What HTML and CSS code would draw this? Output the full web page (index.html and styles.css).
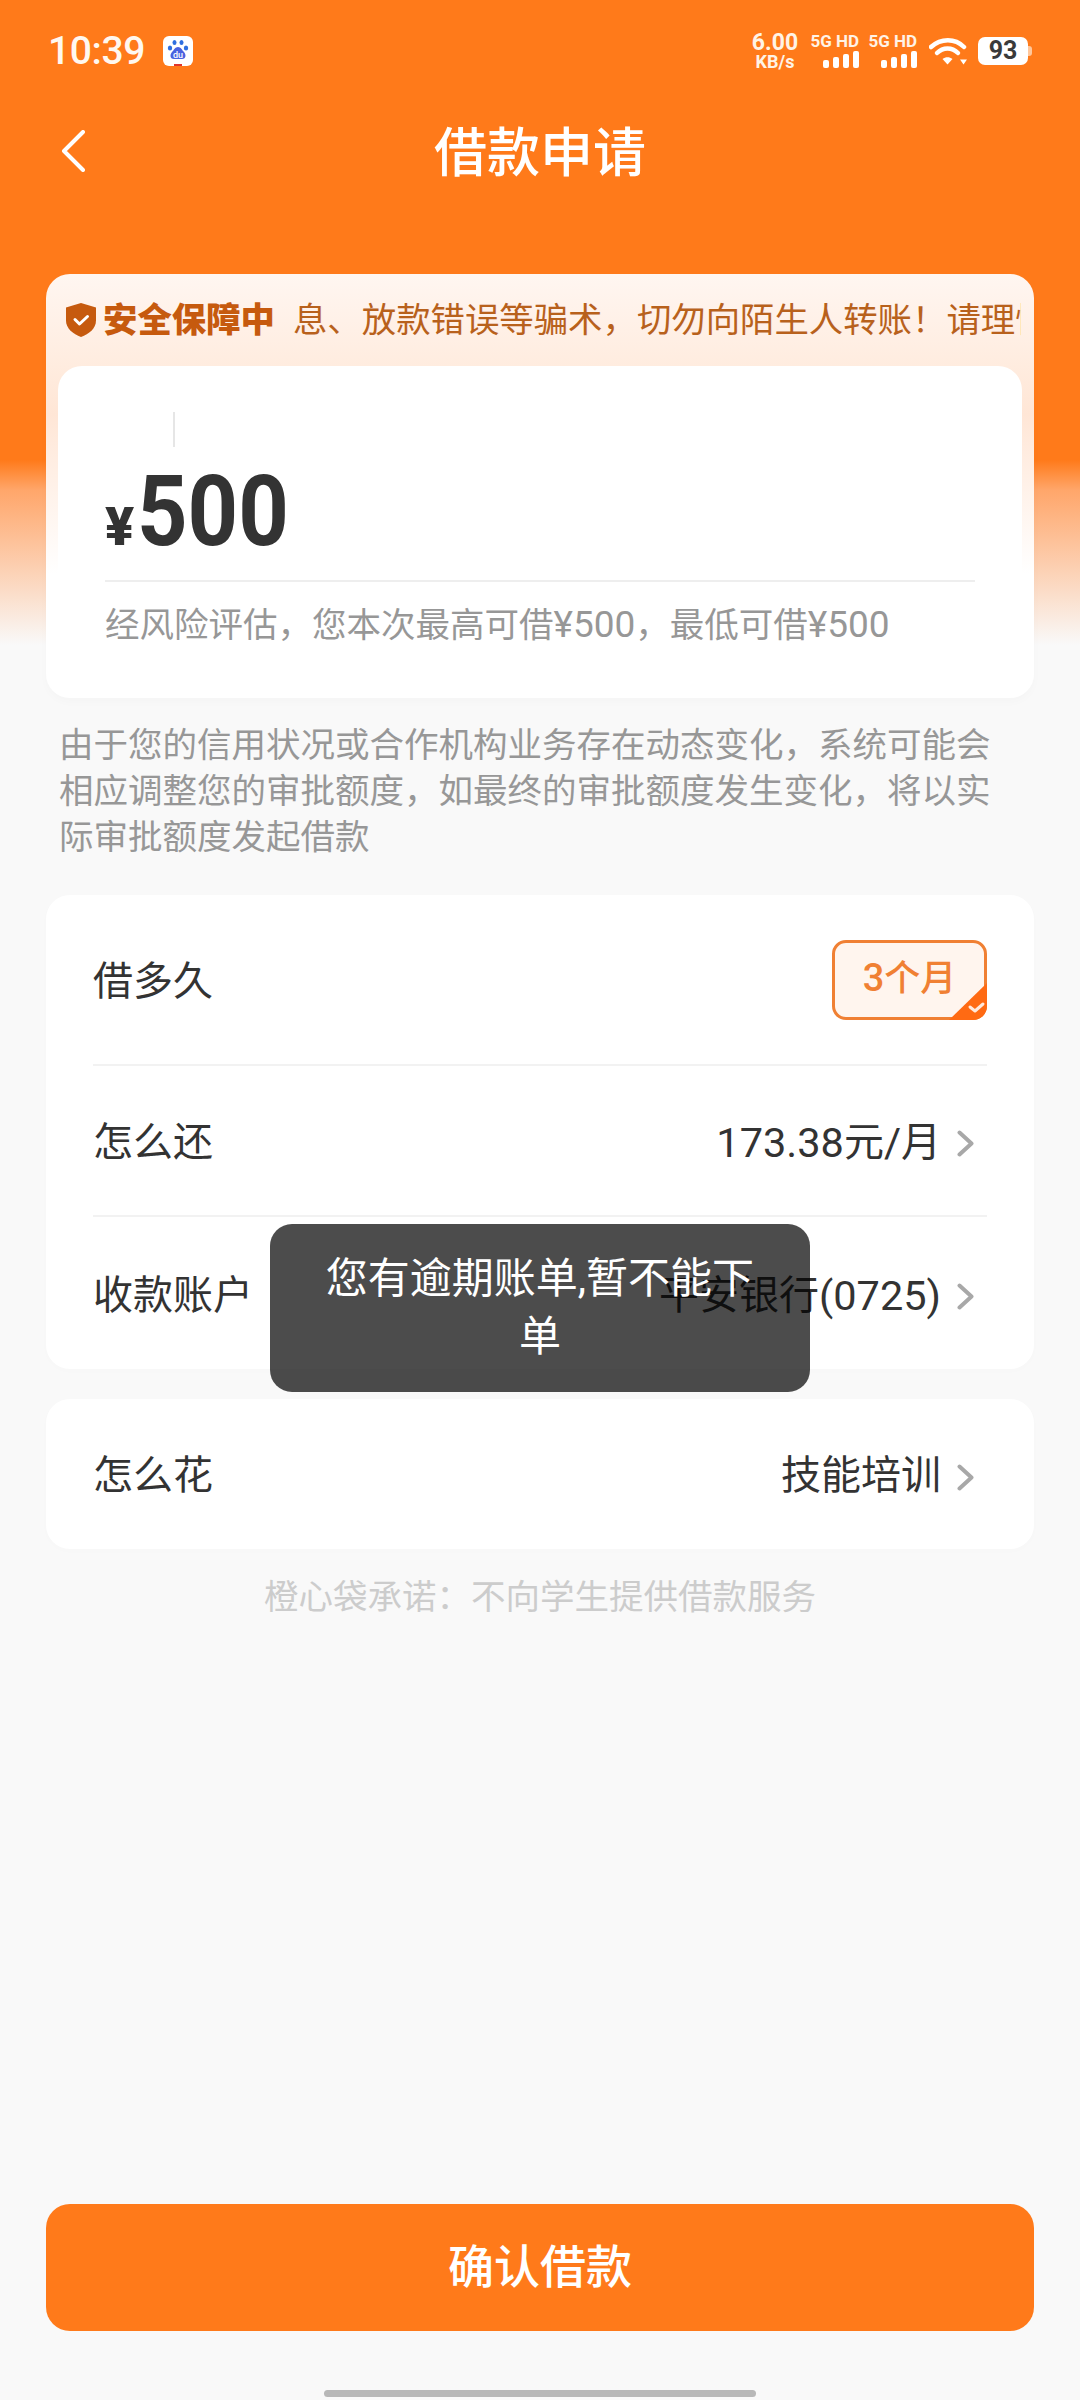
FILE: index.html
```html
<!DOCTYPE html>
<html lang="zh-CN">
<head>
<meta charset="utf-8">
<title>借款申请</title>
<link rel="stylesheet" href="styles.css">
</head>
<body>
<div class="page">
  <div class="status">
    <div class="status-left">
      <span class="time">10:39</span>
      <span class="baidu">
        <svg class="baidu-paw" width="30" height="30" viewBox="0 0 30 30">
          <rect width="30" height="30" rx="6" fill="#fff"/>
          <rect x="11" y="28" width="8" height="2" fill="#e0352b"/>
          <ellipse cx="11.5" cy="6.5" rx="2" ry="2.6" fill="#2f6fe0"/>
          <ellipse cx="18.5" cy="6.5" rx="2" ry="2.6" fill="#2f6fe0"/>
          <ellipse cx="7" cy="12" rx="2.2" ry="2.6" fill="#2f6fe0"/>
          <ellipse cx="23" cy="12" rx="2.2" ry="2.6" fill="#2f6fe0"/>
          <path d="M15 11c-3 0-4 3-6 5s-2.500 7 2 7h8c4.500 0 4-5 2-7s-3-5-6-5z" fill="#4a62e0"/>
          <text x="15" y="21.500" text-anchor="middle" class="baidu-du">du</text>
        </svg>
      </span>
    </div>
    <div class="status-right">
      <div class="speed"><span>6.00</span><span>KB/s</span></div>
      <div class="signal">
        <span class="sig-label">5G HD</span>
        <svg width="36" height="17" viewBox="0 0 36 17" fill="#fff"><rect x="0" y="9" width="6" height="8" rx="2"/><rect x="10" y="6" width="6" height="11" rx="2"/><rect x="20" y="3" width="6" height="14" rx="2"/><rect x="30" y="0" width="6" height="17" rx="2"/></svg>
      </div>
      <div class="signal">
        <span class="sig-label">5G HD</span>
        <svg width="36" height="17" viewBox="0 0 36 17" fill="#fff"><rect x="0" y="9" width="6" height="8" rx="2"/><rect x="10" y="6" width="6" height="11" rx="2"/><rect x="20" y="3" width="6" height="14" rx="2"/><rect x="30" y="0" width="6" height="17" rx="2"/></svg>
      </div>
      <svg class="wifi" width="38" height="28" viewBox="0 0 38 28">
        <path d="M2 10C12 1 26 1 35 10" fill="none" stroke="#fff" stroke-width="4.500" stroke-linecap="round"/>
        <path d="M8 16C14 10 23 10 29 16" fill="none" stroke="#fff" stroke-width="4.500" stroke-linecap="round"/>
        <path d="M13.500 22C16.500 19.500 20.500 19.500 23.500 22L18.500 27.500z" fill="#fff"/>
        <path d="M31 22.500h7l-3.500 5z" fill="#fff"/>
      </svg>
      <div class="battery"><span class="battery-body">93</span><span class="battery-nub"></span></div>
    </div>
  </div>

  <header class="nav">
    <svg class="back" width="24" height="42" viewBox="0 0 24 42"><path d="M22 2L3 21l19 19" fill="none" stroke="#fff" stroke-width="4" stroke-linecap="round" stroke-linejoin="round"/></svg>
    <h1 class="title">借款申请</h1>
  </header>

  <section class="amount-card">
    <div class="notice">
      <svg class="shield" width="30" height="34" viewBox="0 0 30 34"><path d="M15 0l15 4.500v13c0 8-7 13.500-15 16.500C7 31 0 25.500 0 17.500v-13z" fill="#c65a0e"/><path d="M9 16.500l4.500 4.500 8-7.500" fill="none" stroke="#fff" stroke-width="3" stroke-linecap="round" stroke-linejoin="round"/></svg>
      <strong class="notice-tag">安全保障中</strong>
      <div class="notice-scroll"><span class="notice-text">息、放款错误等骗术，切勿向陌生人转账！请理性</span></div>
    </div>
    <div class="amount-inner">
      <div class="caret-row"><span class="caret"></span></div>
      <div class="amount"><span class="yen">¥</span><span class="num">500</span></div>
      <p class="limit">经风险评估，您本次最高可借<span class="lat">¥500</span>，最低可借<span class="lat">¥500</span></p>
    </div>
  </section>

  <p class="note">由于您的信用状况或合作机构业务存在动态变化，系统可能会相应调整您的审批额度，如最终的审批额度发生变化，将以实际审批额度发起借款</p>

  <section class="list first">
    <div class="row row-term">
      <span class="label">借多久</span>
      <span class="chip"><span class="chip-num">3</span>个月
        <svg class="chip-corner" width="38" height="37" viewBox="0 0 38 37"><path d="M38 0v23a14 14 0 0 1-14 14H0z" fill="#ff6a13"/><path d="M21 24l5 4 8-7" fill="none" stroke="#ffe9dc" stroke-width="3" stroke-linecap="round" stroke-linejoin="round"/></svg>
      </span>
    </div>
    <div class="row row-pay">
      <span class="label">怎么还</span>
      <span class="value"><span class="lat-value">173.38</span>元<span class="lat-value">/</span>月<svg class="chev" width="18" height="27" viewBox="0 0 18 27"><path d="M2.500 2.500l12 11-12 11" fill="none" stroke="#a8a8a8" stroke-width="4" stroke-linecap="round" stroke-linejoin="round"/></svg></span>
    </div>
    <div class="row row-account">
      <span class="label">收款账户</span>
      <span class="value">平安银行<span class="lat-value">(0725)</span><svg class="chev" width="18" height="27" viewBox="0 0 18 27"><path d="M2.500 2.500l12 11-12 11" fill="none" stroke="#a8a8a8" stroke-width="4" stroke-linecap="round" stroke-linejoin="round"/></svg></span>
    </div>
  </section>

  <section class="list second">
    <div class="row row-use">
      <span class="label">怎么花</span>
      <span class="value">技能培训<svg class="chev" width="18" height="27" viewBox="0 0 18 27"><path d="M2.500 2.500l12 11-12 11" fill="none" stroke="#a8a8a8" stroke-width="4" stroke-linecap="round" stroke-linejoin="round"/></svg></span>
    </div>
  </section>

  <p class="promise">橙心袋承诺：不向学生提供借款服务</p>

  <button class="confirm" type="button">确认借款</button>
  <div class="home-bar"></div>

  <div class="toast">您有逾期账单,暂不能下单</div>
</div>
</body>
</html>
```

FILE: styles.css
```css
* { box-sizing: border-box; }
html, body { margin: 0; padding: 0; }
body {
  width: 1080px;
  height: 2400px;
  font-family: Roboto, "Noto Sans CJK SC", sans-serif;
  color: #333;
}
.page {
  position: relative;
  width: 1080px;
  height: 2400px;
  overflow: hidden;
  display: flex;
  flex-direction: column;
  background: linear-gradient(180deg, #ff7a1a 0, #ff7a1a 460px, #ffa66a 490px, #f9f9f9 645px);
}

/* status bar */
.status {
  height: 100px;
  padding: 2px 48px 0 48px;
  display: flex;
  align-items: center;
  justify-content: space-between;
  color: #fff;
  flex: none;
}
.status-left { display: flex; align-items: center; gap: 18px; }
.time { font-size: 39px; font-weight: 500; line-height: 44px; letter-spacing: -.4px; color: #fff8f0; }
.baidu { display: flex; width: 30px; height: 30px; }
.baidu-du { font-size: 9px; font-weight: 500; fill: #fff; font-family: Roboto, sans-serif; }
.status-right { display: flex; align-items: center; }
.speed {
  width: 50px;
  display: flex;
  flex-direction: column;
  align-items: center;
  font-weight: 700;
  color: #fff3e6;
  margin-right: 11px;
}
.speed span:first-child { font-size: 23px; line-height: 22px; }
.speed span:last-child { font-size: 18px; line-height: 16px; }
.signal {
  width: 48px;
  margin-right: 10px;
  display: flex;
  flex-direction: column;
  align-items: flex-end;
  gap: 3px;
}
.sig-label { font-size: 17px; line-height: 14px; font-weight: 700; white-space: nowrap; color: #fff3e6; }
.wifi { margin: 0 11px 0 2px; }
.battery { display: flex; align-items: center; }
.battery-body {
  width: 50px;
  height: 28px;
  border-radius: 7px;
  background: #fff;
  color: #3a3a3a;
  font-size: 25px;
  font-weight: 700;
  line-height: 28px;
  text-align: center;
}
.battery-nub { width: 4px; height: 10px; border-radius: 0 3px 3px 0; background: #ffc79c; }

/* nav */
.nav {
  flex: none;
  height: 102px;
  position: relative;
  display: flex;
  align-items: center;
  justify-content: center;
  padding-top: 6px;
}
.back { position: absolute; left: 61px; top: 30px; }
.title { margin: 0; font-size: 53px; font-weight: 500; line-height: 70px; color: #fff; }

/* amount card */
.amount-card {
  flex: none;
  margin: 72px 46px 0;
  height: 424px;
  border-radius: 24px;
  background: linear-gradient(180deg, #fff6f1 0, #ffecdf 92px, #ffe6d6 140px, #fff 300px);
  box-shadow: 0 4px 10px rgba(0, 0, 0, .02);
  padding: 0 12px;
}
.notice {
  height: 92px;
  display: flex;
  align-items: center;
  padding-left: 8px;
}
.shield { flex: none; margin-right: 7px; }
.notice-tag { flex: none; font-size: 34.400px; font-weight: 900; color: #c65a0e; line-height: 44px; white-space: nowrap; }
.notice-scroll { flex: 1; min-width: 0; overflow: hidden; margin: 0 1px 0 18px; }
.notice-text { display: block; font-size: 34.400px; line-height: 44px; color: #b8611c; white-space: nowrap; }
.amount-inner {
  height: 332px;
  border-radius: 24px;
  background: #fff;
  padding: 46px 47px 0;
}
.caret-row { height: 35px; padding-left: 68px; }
.caret { display: block; width: 2px; height: 35px; background: #e6e6e6; }
.amount {
  height: 135px;
  padding-top: 15px;
  border-bottom: 2px solid #eeeeee;
  display: flex;
  align-items: baseline;
}
.yen { font-size: 54px; font-weight: 900; line-height: 70px; color: #333; margin-right: 3px; }
.num {
  display: inline-block;
  font-size: 98px;
  font-weight: 700;
  line-height: 100px;
  color: #333;
  transform: scaleX(.9);
  transform-origin: left center;
}
.limit { margin: 20px 0 0; font-size: 34.500px; line-height: 46px; color: #979797; white-space: nowrap; }
.lat { font-size: 37px; }

/* note */
.note {
  flex: none;
  margin: 24px 0 0;
  padding: 0 59px;
  font-size: 34.500px;
  line-height: 46px;
  color: #979797;
}

/* lists */
.list {
  flex: none;
  margin: 0 46px;
  padding: 0 47px;
  border-radius: 24px;
  background: #fff;
  box-shadow: 0 2px 8px rgba(0, 0, 0, .01);
}
.first { margin-top: 35px; }
.second { margin-top: 30px; }
.row { display: flex; align-items: center; justify-content: space-between; padding-top: 4px; }
.row-term { height: 171px; border-bottom: 2px solid #f2f2f2; }
.row-pay { height: 151px; border-bottom: 2px solid #f2f2f2; }
.row-account { height: 152px; padding-top: 5px; }
.row-use { height: 150px; }
.label { font-size: 40px; line-height: 50px; color: #333; }
.value { display: flex; align-items: center; font-size: 40px; line-height: 50px; color: #333; }
.lat-value { font-size: 41.500px; font-weight: 400; }
.chev { margin: 2px 12px 0 16px; flex: none; }
.chip {
  position: relative;
  width: 155px;
  height: 80px;
  border: 3px solid #f08033;
  border-radius: 14px;
  background: #fff5ee;
  color: #f08033;
  font-size: 36px;
  font-weight: 500;
  line-height: 70px;
  text-align: center;
  margin-bottom: 3px;
}
.chip-num { font-size: 38px; }
.chip-corner { position: absolute; right: -3px; bottom: -3px; }

/* promise */
.promise {
  flex: none;
  margin: 25px 0 0;
  font-size: 34.500px;
  line-height: 46px;
  color: #cccccc;
  text-align: center;
}

/* bottom */
.confirm {
  flex: none;
  margin: auto 46px 0;
  height: 127px;
  padding: 0 0 10px;
  border: 0;
  border-radius: 24px;
  background: #ff7a1a;
  color: #fff;
  font-family: inherit;
  font-size: 46px;
  font-weight: 500;
}
.home-bar {
  flex: none;
  width: 432px;
  height: 7px;
  margin: 59px auto 3px;
  border-radius: 4px;
  background: #b8b8b8;
}

/* toast */
.toast {
  position: absolute;
  left: 270px;
  top: 1224px;
  width: 540px;
  height: 168px;
  padding: 26px 48px 0;
  border-radius: 22px;
  background: rgba(0, 0, 0, .7);
  color: #fff;
  font-size: 42px;
  line-height: 58px;
  text-align: center;
}
```
